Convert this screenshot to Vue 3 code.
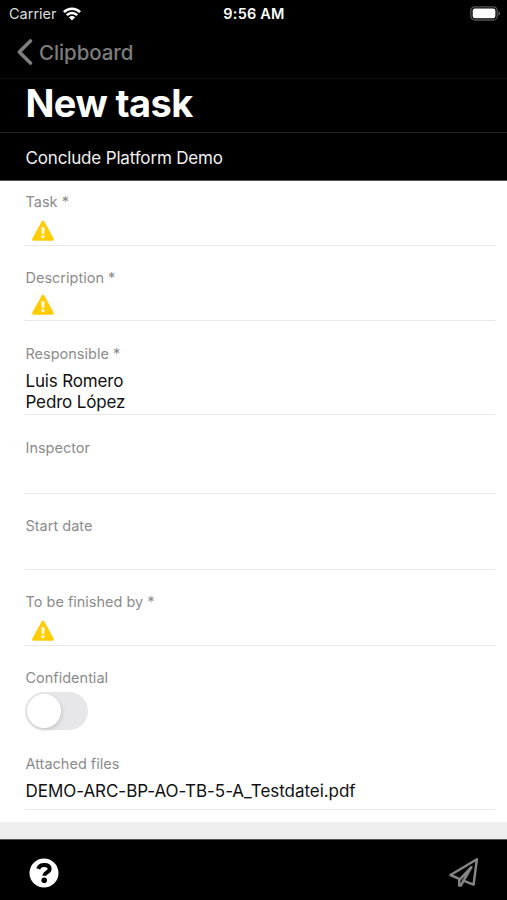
<script setup>
const fields = [
  { key: 'task', label: 'Task *', warning: true },
  { key: 'description', label: 'Description *', warning: true },
  { key: 'responsible', label: 'Responsible *', values: ['Luis Romero', 'Pedro López'] },
  { key: 'inspector', label: 'Inspector' },
  { key: 'start', label: 'Start date' },
  { key: 'finish', label: 'To be finished by *', warning: true },
  { key: 'confidential', label: 'Confidential', toggle: true },
  { key: 'files', label: 'Attached files', values: ['DEMO-ARC-BP-AO-TB-5-A_Testdatei.pdf'] },
]
</script>

<template>
  <div class="screen">
    <header>
      <div class="status">
        <div class="carrier">
          <span>Carrier</span>
          <svg width="18" height="14" viewBox="0 0 18 14">
            <g fill="none" stroke="#fff" stroke-width="2.6">
              <path d="M.9 5.1C5.4.6 12.6.6 17.1 5.1" />
              <path d="M3.8 8.2c2.9-2.9 7.5-2.9 10.4 0" />
            </g>
            <path d="M5.9 10.3c1.8-1.6 4.4-1.6 6.2 0L9 13.5z" fill="#fff" />
          </svg>
        </div>
        <div class="clock">9:56 AM</div>
        <svg class="battery" width="31" height="15" viewBox="0 0 31 15">
          <rect x=".8" y=".8" width="26.4" height="13.2" rx="4" fill="none" stroke="#555" stroke-width="1.3" />
          <rect x="2.7" y="2.6" width="22.7" height="9.6" rx="2.2" fill="#fff" />
          <path d="M28.5 5q3 2.4 0 4.8z" fill="#666" />
        </svg>
      </div>
      <nav>
        <svg width="16" height="26" viewBox="0 0 16 26">
          <path d="M13.4 1.9 2.3 13l11.1 11.1" fill="none" stroke="#7d7d7d" stroke-width="3.6" stroke-linecap="round" stroke-linejoin="round" />
        </svg>
        <span>Clipboard</span>
      </nav>
      <h1><span>New task</span></h1>
      <div class="project"><span>Conclude Platform Demo</span></div>
    </header>

    <main>
      <section v-for="f in fields" :key="f.key" class="field" :class="f.key">
        <label>{{ f.label }}</label>
        <svg v-if="f.warning" class="warning" width="24" height="22" viewBox="0 0 24 22">
          <path d="M12 2.2 21.3 19.2H2.7z" fill="#fc0" stroke="#fc0" stroke-width="3" stroke-linejoin="round" />
          <path d="M10.2 7.2h3.6l-.6 6.7h-2.4z" fill="#fff7df" />
          <circle cx="12" cy="16.6" r="1.7" fill="#fff7df" />
        </svg>
        <div v-if="f.toggle" class="switch"><i></i></div>
        <div v-if="f.values" class="values">
          <div v-for="v in f.values" :key="v">{{ v }}</div>
        </div>
      </section>
    </main>

    <footer>
      <div class="help">
        <svg width="30" height="30" viewBox="0 0 30 30">
          <circle cx="15" cy="15" r="14.5" fill="#fff" />
          <path d="M9.2 10.9c1-2.7 3-3.8 6-3.8 3.4 0 5.4 1.5 5.4 3.9 0 3.5-5.2 3.3-5.2 6.8" fill="none" stroke="#000" stroke-width="4" />
          <circle cx="15.2" cy="22.3" r="2.8" fill="#000" />
        </svg>
      </div>
      <svg class="send" width="32" height="32" viewBox="0 0 32 32">
        <g fill="none" stroke="#858585" stroke-width="2.5" stroke-linecap="round" stroke-linejoin="round">
          <path d="M11.2 21.8 2.5 18 28.9 2.2 25.6 27.6 15.4 23.6" />
          <path d="M23.4 10.2 11.2 23.2v5.4h1.6l2.8-5z" />
        </g>
      </svg>
    </footer>
  </div>
</template>

<style>
body { margin: 0; background: #fff; }
</style>

<style scoped>
.screen {
  width: 507px;
  height: 900px;
  display: flex;
  flex-direction: column;
  overflow: hidden;
  box-sizing: border-box;
  background: #efefef;
  color: #111;
  font-family: Inter, "Liberation Sans", sans-serif;
}
.screen * { box-sizing: border-box; }
svg { display: block; flex: none; }
header {
  height: 181px;
  flex: none;
  background: #000;
  border-bottom: 1px solid #555;
  color: #fff;
}
.status {
  height: 27px;
  display: grid;
  grid-template-columns: 1fr auto 1fr;
  align-items: center;
  padding: 0 6px 0 9px;
  font-size: 14.5px;
}
.carrier { display: flex; align-items: center; gap: 6px; color: #ddd; letter-spacing: 0; }
.clock { font-weight: 600; letter-spacing: .2px; padding-right: 2px; }
.battery { justify-self: end; }
nav {
  height: 52px;
  display: flex;
  align-items: center;
  gap: 6px;
  padding: 0 0 1px 17px;
  border-bottom: 1px solid #0c0c0c;
  color: #7d7d7d;
  font-size: 20.5px;
  font-weight: 500;
  letter-spacing: -.1px;
}
nav span { padding-top: 1px; }
h1 {
  height: 54px;
  margin: 0;
  padding: 0 0 0 25.5px;
  border-bottom: 1px solid #242528;
  font-size: 38px;
  font-weight: 700;
  line-height: 48px;
  letter-spacing: -.6px;
}
.project {
  height: 47px;
  padding-left: 25.5px;
  font-size: 17px;
  line-height: 50px;
  letter-spacing: -.16px;
  color: #f0f0f0;
}
main { height: 641px; flex: none; padding: 0 12px 0 25px; background: #fff; }
.field { height: 76px; padding-top: 22px; border-bottom: 1px solid #e9e9ea; }
label { display: block; height: 20px; padding-left: .5px; line-height: 20px; font-size: 14.5px; letter-spacing: 0; color: #8b8b8b; }
.task { height: 65px; padding-top: 11px; }
.description { height: 75px; }
.responsible { height: 94px; }
.responsible label { line-height: 21px; }
.inspector { height: 79px; padding-top: 23px; }
.confidential { height: 86px; border-bottom: 0; }
.files { height: 78px; padding-top: 21px; }
.files label { line-height: 21px; }
.warning { margin: 8px 0 0 5.5px; }
.description .warning { margin-top: 6px; }
.values { padding: 8px 0 0 .5px; font-size: 17px; line-height: 20.5px; letter-spacing: -.15px; }
.files .values { letter-spacing: -.04px; line-height: 21px; }
.switch {
  width: 63px;
  height: 38px;
  margin-top: 4px;
  padding: 2px;
  border-radius: 19px;
  background: #e7e7e9;
}
.switch i {
  display: block;
  width: 34px;
  height: 34px;
  border-radius: 50%;
  background: #fff;
  box-shadow: 1px 2px 4px #0002;
}
footer {
  height: 61px;
  margin-top: auto;
  padding: 6px 27px 0 28.5px;
  display: flex;
  align-items: center;
  justify-content: space-between;
  flex: none;
  border-top: 1px solid #555;
  background: #000;
}
</style>
